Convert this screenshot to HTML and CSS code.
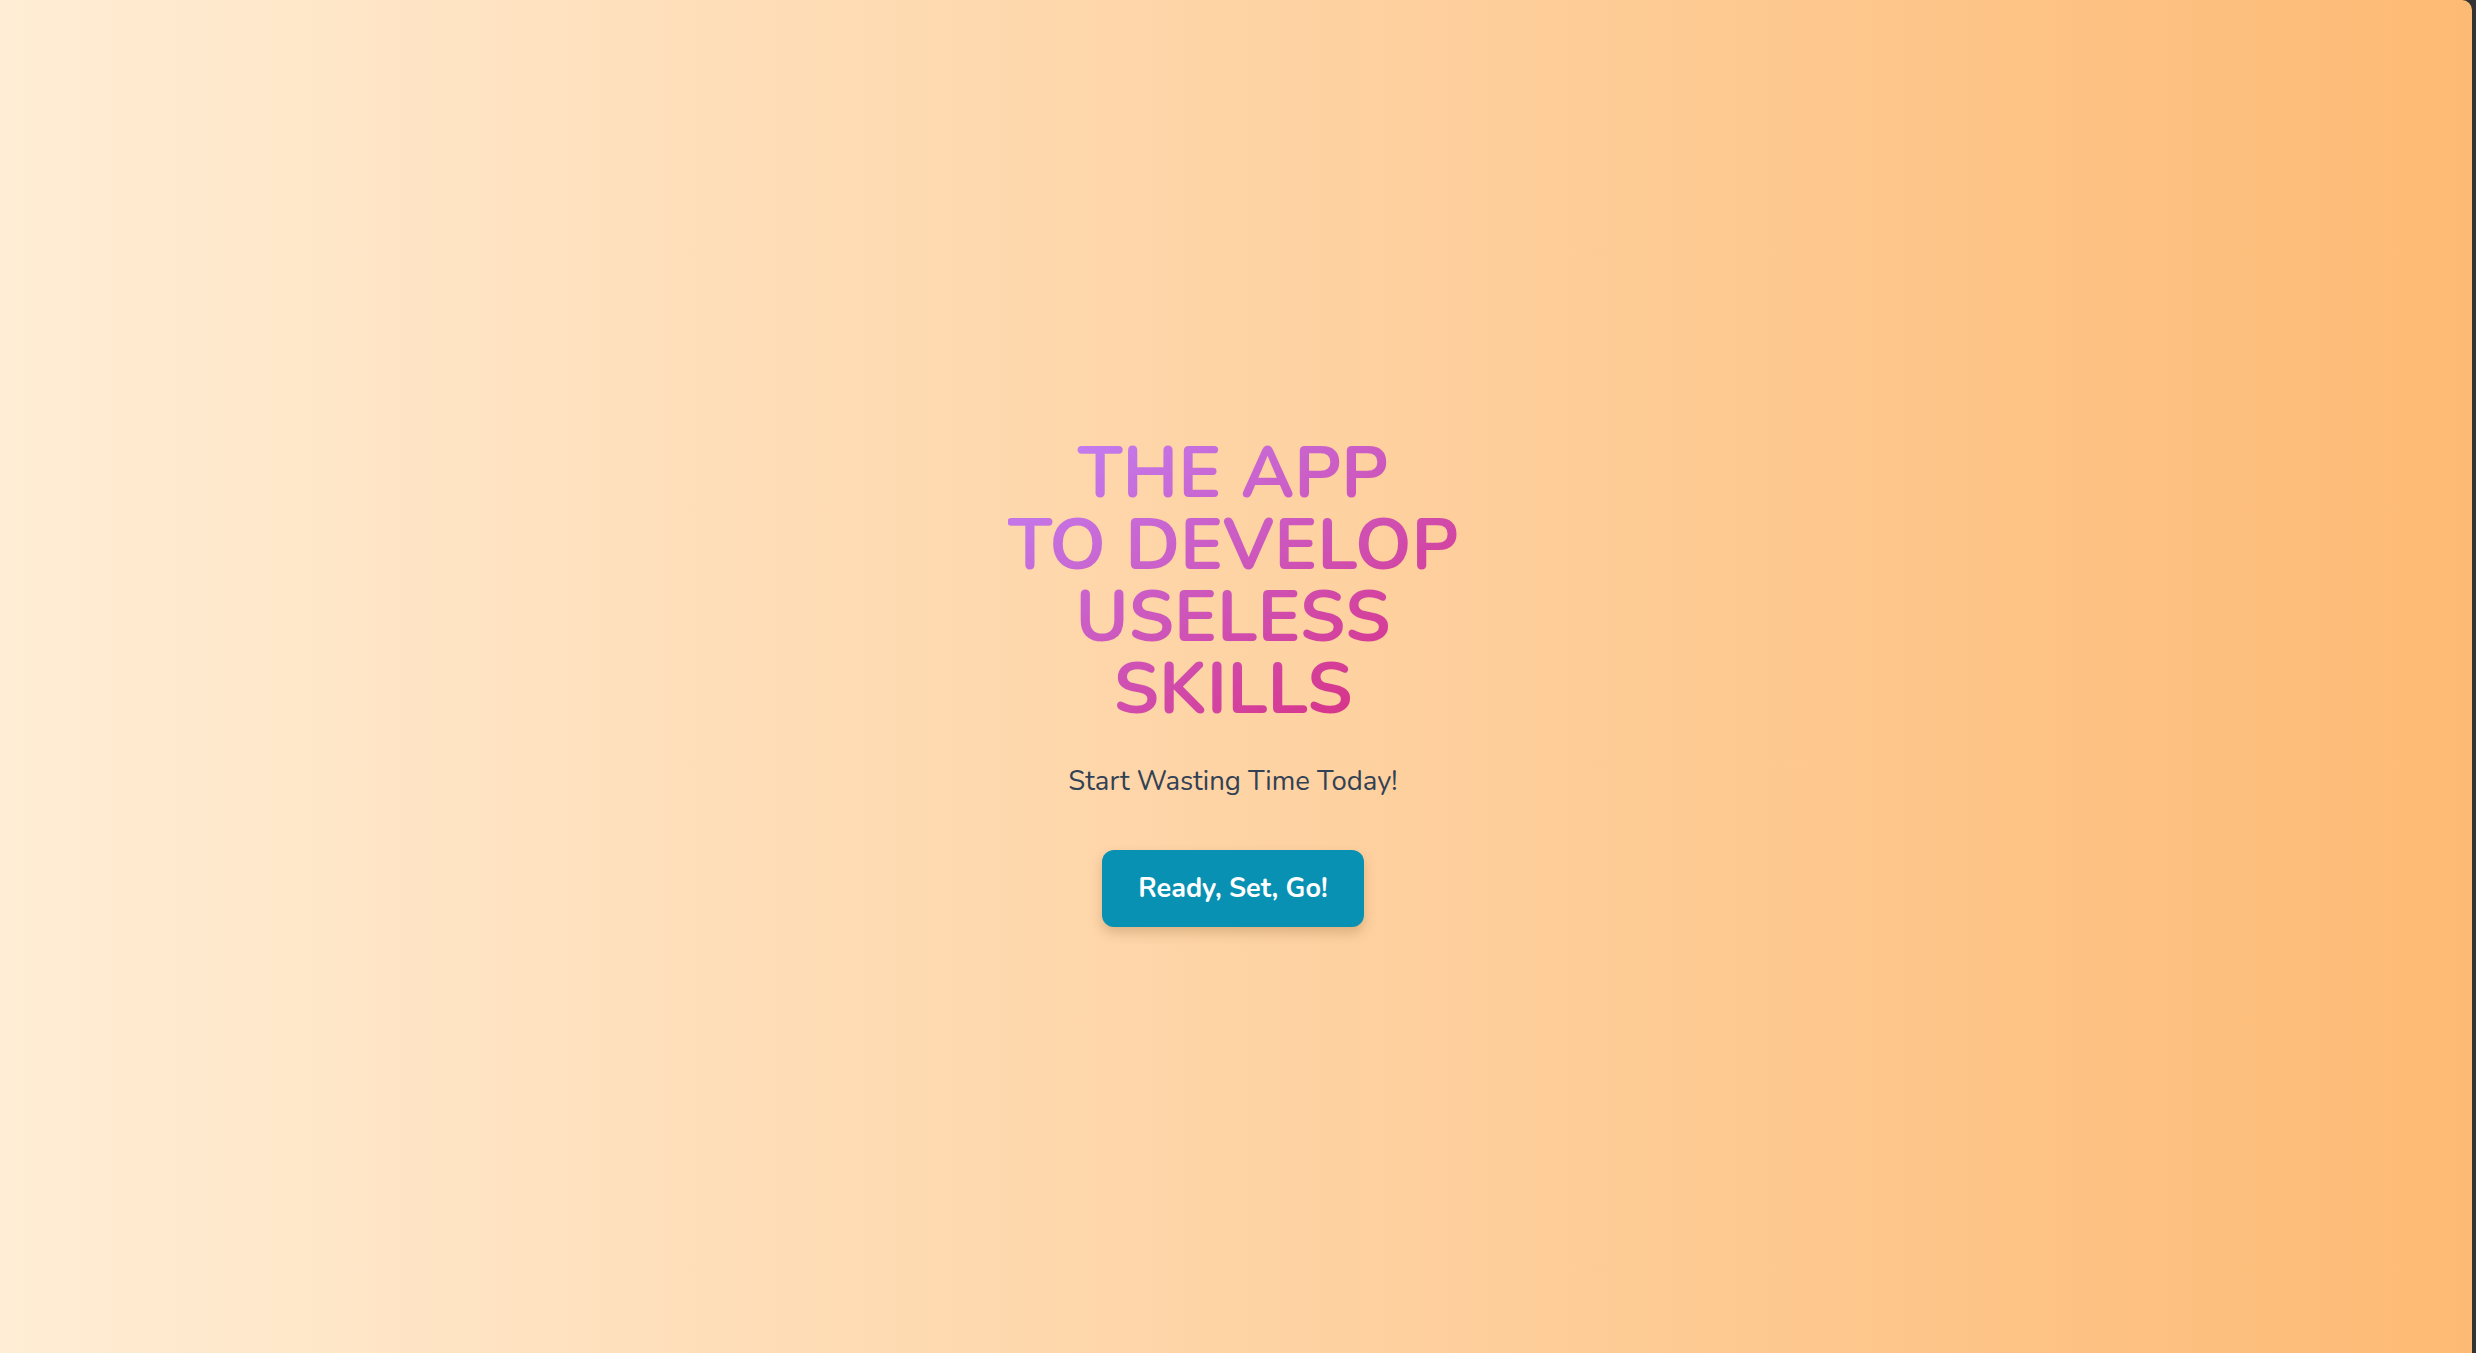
FILE: index.html
```html
<!DOCTYPE html>
<html lang="en">
<head>
<meta charset="utf-8">
<title>Useless Skills</title>
<link rel="stylesheet" href="styles.css">
</head>
<body>
<main class="page">
  <section class="hero">
    <h1 class="title">THE APP<br>TO DEVELOP<br>USELESS<br>SKILLS</h1>
    <p class="subtitle">Start Wasting Time Today!</p>
    <button class="cta">Ready, Set, Go!</button>
  </section>
</main>
</body>
</html>
```
FILE: styles.css
```css
html, body {
  margin: 0;
  padding: 0;
  height: 100%;
}
body {
  background: #333333;
  font-family: "Nunito", Lato, "Open Sans", sans-serif;
  display: flex;
}
.page {
  flex: 1;
  margin-right: 4px;
  padding-right: 6px;
  border-top-right-radius: 10px;
  background: linear-gradient(to right, #ffedd5, #fdba74);
  display: flex;
  align-items: center;
  justify-content: center;
}
.hero {
  display: flex;
  flex-direction: column;
  align-items: center;
  text-align: center;
  padding-top: 10px;
}
.title {
  margin: 0;
  font-size: 72px;
  line-height: 72px;
  font-weight: 700;
  background: linear-gradient(to bottom right, #c084fc, #db2777);
  -webkit-background-clip: text;
  background-clip: text;
  color: transparent;
}
.subtitle {
  margin: 36px 0 0;
  font-size: 27.5px;
  line-height: 40px;
  color: #334155;
}
.cta {
  margin-top: 49px;
  width: 262px;
  height: 77px;
  border: none;
  border-radius: 12px;
  background: #0891b2;
  color: #ffffff;
  font-family: inherit;
  font-size: 27px;
  font-weight: 700;
  box-shadow: 0 6px 12px rgba(120, 80, 30, 0.25);
}
```
